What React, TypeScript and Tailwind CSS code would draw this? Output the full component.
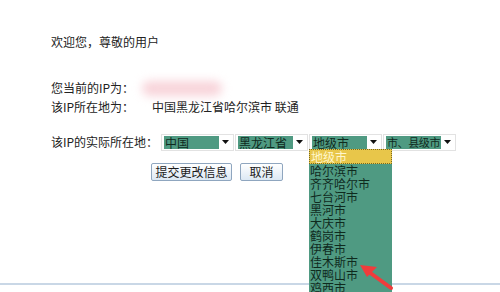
import type { FC } from 'react';

const cities = [
  '哈尔滨市',
  '齐齐哈尔市',
  '七台河市',
  '黑河市',
  '大庆市',
  '鹤岗市',
  '伊春市',
  '佳木斯市',
  '双鸭山市',
  '鸡西市',
];

const Arrow: FC = () => (
  <svg className="ml-auto mr-[4px]" width="7" height="4" viewBox="0 0 7 4">
    <path d="M0 0 L7 0 L3.5 4 Z" fill="#111" />
  </svg>
);

const FakeSelect: FC<{ value: string; open?: boolean; small?: boolean }> = ({ value, open, small }) => (
  <div className="relative flex h-[17px] w-[73px] items-center border border-[#e2e2e2] bg-white pl-[2px]">
    <div
      className={`flex h-[13px] min-w-[55px] items-center whitespace-nowrap bg-[#4f9a82] pl-[1px] leading-[13px] text-[#0f2a1e] ${
        small ? 'text-[11px] tracking-[-0.4px]' : 'text-[12px]'
      }`}
    >
      {value}
    </div>
    <Arrow />
    {open && (
      <div className="absolute left-[-1px] top-[14px] z-10 flex w-[83px] flex-col bg-[#4f9a82] pb-[4px]">
        <div className="flex h-[15px] items-center border border-dotted border-[#7a6a20] bg-[#e8c64a] pl-[1px] text-[12px] leading-[13px] text-[#fff6cc]">
          地级市
        </div>
        {cities.map((c) => (
          <div key={c} className="flex h-[13px] items-center whitespace-nowrap pl-[1px] text-[12px] leading-[13px] text-[#0f2a1e]">
            {c}
          </div>
        ))}
      </div>
    )}
  </div>
);

const Btn: FC<{ label: string; w: string }> = ({ label, w }) => (
  <button
    type="button"
    className={`h-[18px] ${w} rounded-[2px] border border-[#8fa6bf] bg-gradient-to-b from-white to-[#dce8f4] text-[12px] leading-none text-[#1a1a1a]`}
  >
    {label}
  </button>
);

const App: FC = () => {
  return (
    <div
      className="relative h-[292px] w-[500px] overflow-hidden bg-white text-[12px] text-[#222]"
      style={{ fontFamily: '"Noto Sans CJK SC", "Noto Sans", sans-serif' }}
    >
      <div className="flex flex-col pl-[51px] pt-[34px]">
        <div className="h-4 leading-4">欢迎您，尊敬的用户</div>

        <div className="mt-[30px] flex h-4 items-center leading-4">
          <span className="w-[91px]">您当前的IP为：</span>
          <div className="h-[15px] w-[80px] rounded-full bg-[#f8d4da] blur-[5px]" />
        </div>

        <div className="mt-[3px] flex h-4 items-center leading-4">
          <span className="w-[101px]">该IP所在地为：</span>
          <span>中国黑龙江省哈尔滨市 联通</span>
        </div>

        <div className="mt-[18px] flex items-center">
          <span className="w-[110px]">该IP的实际所在地：</span>
          <div className="flex gap-[1px]">
            <FakeSelect value="中国" />
            <FakeSelect value="黑龙江省" />
            <FakeSelect value="地级市" open />
            <FakeSelect value="市、县级市" small />
          </div>
        </div>

        <div className="ml-[100px] mt-[12px] flex gap-[8px]">
          <Btn label="提交更改信息" w="w-[81px]" />
          <Btn label="取消" w="w-[43px]" />
        </div>
      </div>

      <div className="mt-[102px] h-[2px] w-full bg-[#c9d7e6]" />

      {/* red arrow annotation */}
      <svg className="absolute left-[355px] top-[258px] z-20" width="45" height="34" viewBox="0 0 45 34">
        <path d="M36 30 L14 14" stroke="#f03c3c" strokeWidth="4" strokeLinecap="round" />
        <path d="M5 7 L22 9 L12 19 Z" fill="#f03c3c" />
      </svg>
    </div>
  );
};

export default App;
